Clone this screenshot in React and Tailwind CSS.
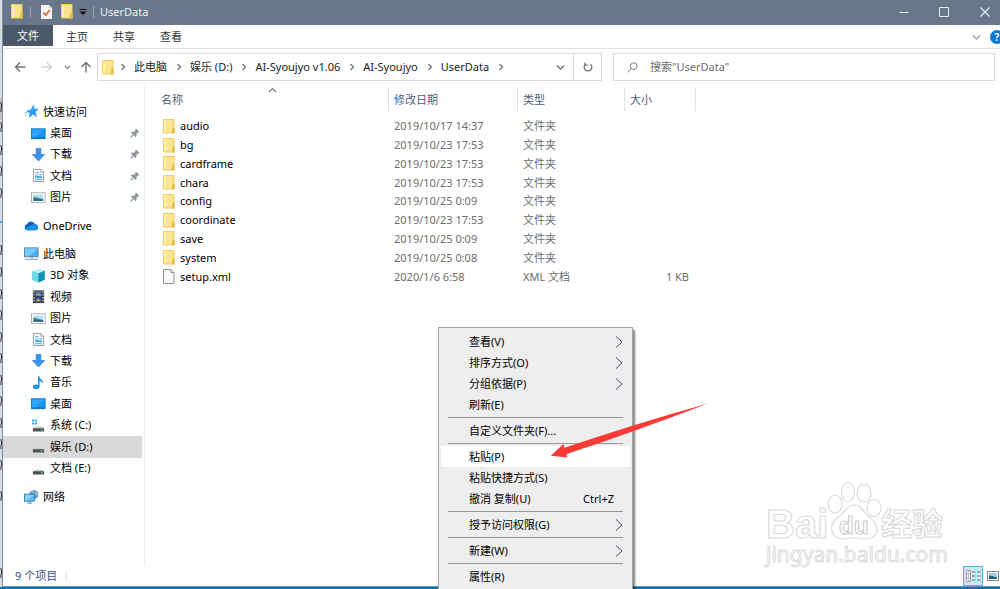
import React from "react";

function Folder({ className = "h-[15px] w-3" }) {
  return (
    <svg viewBox="0 0 12 15" className={className} aria-hidden="true">
      <rect x="0.5" y="0.5" width="10.5" height="13.5" fill="#fde48f" stroke="#f3cf5f" />
      <path d="M1 1h2v12H1z" fill="#fff0b5" />
      <path d="M9.4 8.5h2.2V14.5H8.6z" fill="#e9bd45" />
    </svg>
  );
}

function Chevron({ dir = "right", className = "h-2 w-1.5", stroke = 1.4 }) {
  const paths = {
    right: "M1.5 1L4.5 4L1.5 7",
    down: "M1 2.5L4.5 6L8 2.5",
    up: "M1 6L4.5 2.5L8 6",
  };
  return (
    <svg viewBox={dir === "right" ? "0 0 6 8" : "0 0 9 8"} className={className} fill="none" stroke="currentColor" strokeWidth={stroke} aria-hidden="true">
      <path d={paths[dir]} />
    </svg>
  );
}

const drive = (
  <>
    <path d="M4 9h8.500l1.500 2.500H2.500z" fill="#c9cccd" />
    <rect x="2" y="11" width="12" height="3.500" rx="0.6" fill="#4d5153" />
    <rect x="10.500" y="12" width="2" height="1.300" fill="#54e06a" />
  </>
);

const ICONS = {
  star: (
    <>
      <path d="M10 1.500l1 4.200 4-.2-3.200 3 1.500 4.500-4-2-3.600 3.300.8-4.600L2.800 7.500l4.500-.8z" fill="#2a9df4" stroke="#2a9df4" strokeWidth=".8" />
      <path d="M1 12.500h3M0.500 9.500h3" stroke="#7cc3f5" strokeWidth="1.200" />
    </>
  ),
  desktop: (
    <>
      <rect x="0.500" y="3" width="14.500" height="10.500" fill="#1594f0" stroke="#0b79cf" />
      <path d="M1 3.500h13.500L4 13H1z" fill="#3eaeff" opacity=".6" />
      <path d="M1 12.800h14" stroke="#0a68b5" />
    </>
  ),
  download: <path d="M5.500 1.500h5V8h4L8 15 1.500 8h4z" fill="#3a93e6" stroke="#2079cb" strokeWidth=".7" />,
  doc: (
    <>
      <path d="M2.500 1.500h8l3 3v10h-11z" fill="#f6f9fb" stroke="#8c959b" />
      <path d="M10.500 1.500v3h3" fill="#dfe5e9" stroke="#8c959b" strokeWidth=".8" />
      <path d="M4.500 5h4M4.500 7.500h3M9 7h3M4.500 12.500h7" stroke="#5ba7d6" />
      <rect x="4.500" y="8.500" width="7" height="2.500" fill="#52b1e6" />
    </>
  ),
  picture: (
    <>
      <rect x="0.500" y="3" width="14.500" height="10.500" fill="#fff" stroke="#a7acb0" />
      <rect x="2.500" y="5" width="10.500" height="6.500" fill="#a9dcf5" />
      <path d="M2.500 7.500c4 0 6 2 10.500 2v2H2.500z" fill="#3d8277" />
      <path d="M2.500 10.500c4-1.500 6 0 10.500 0v1H2.500z" fill="#2c5d8e" />
    </>
  ),
  onedrive: (
    <>
      <path d="M3.500 13A3.300 3.300 0 0 1 3 6.600 5 5 0 0 1 12 6.500a3.400 3.400 0 0 1 1 6.500z" fill="#0a64b8" />
      <path d="M3.500 13c-1.500 0-2.600-.7-3-1.800L8 7.500c2-1.300 5-1 6.500 1.300.9 1.700 0 4.200-2.500 4.200z" fill="#1490e6" />
    </>
  ),
  pc: (
    <>
      <rect x="0.500" y="2" width="14.500" height="9.500" fill="#49b4f4" stroke="#5b7f99" />
      <path d="M1 2.500h13.500L5 11H1z" fill="#8ad4ff" opacity=".7" />
      <path d="M6 12h4v1H6z" fill="#8b9aa5" />
      <path d="M1 14.300h14" stroke="#93a5b3" strokeWidth="1.200" />
    </>
  ),
  cube: (
    <>
      <path d="M1.500 3.500L9 1l5.500 2v9.500L8 15.500l-6.500-3z" fill="#29b4cf" />
      <path d="M1.500 3.500L8 5.500v10l-6.500-3z" fill="#6fd8e8" />
      <path d="M8 5.500l6.500-2.500v9.500L8 15.500z" fill="#1293b5" />
      <path d="M1.500 3.500L9 1l5.500 2L8 5.500z" fill="#c1f1f7" />
    </>
  ),
  video: (
    <>
      <rect x="2" y="1.500" width="12" height="13.500" fill="#3b3d42" />
      <path d="M3.200 2.500v12M12.800 2.500v12" stroke="#e8e8e8" strokeWidth="1.200" strokeDasharray="1.500 1.500" />
      <rect x="4.800" y="2.500" width="6.400" height="5" fill="#3c78c8" />
      <rect x="4.800" y="8.500" width="6.400" height="5.500" fill="#31539b" />
      <path d="M5 6.500l3-2 3 3zM5 13l2.500-3 3.500 3z" fill="#d8a33b" />
      <path d="M8.500 3l2 1.500" stroke="#c84f3b" />
    </>
  ),
  music: (
    <>
      <ellipse cx="5.500" cy="12.500" rx="3.500" ry="2.500" fill="#1b97ee" />
      <path d="M7.500 1.500h1.600c.2 3 4.200 3.500 3.600 8.200-.7-2-2.200-2.700-3.600-3v6H7.500z" fill="#1b97ee" />
    </>
  ),
  system: (
    <>
      <path d="M1 1.500h2.300v2.200H1zM4.200 1.500h2.300v2.200H4.200zM1 4.700h2.300v2.200H1zM4.200 4.700h2.300v2.200H4.200z" fill="#22b4f2" />
      {drive}
    </>
  ),
  drive,
  network: (
    <>
      <circle cx="10.500" cy="6" r="5" fill="#6d9fbd" />
      <path d="M7 3c2-2 4-1 3 1M13 3c0 1 0 3 2 3" fill="none" stroke="#a9d0e2" strokeWidth="1.200" />
      <rect x="0.500" y="5.500" width="10.500" height="7.500" fill="#5bbdf3" stroke="#3a7ba8" />
      <path d="M1 6h9L3 12.500H1z" fill="#9cdcff" opacity=".7" />
      <path d="M3.500 15h5M6 13v2" stroke="#7f9cb1" strokeWidth="1.200" />
    </>
  ),
};

function Icon({ name }) {
  return (
    <svg viewBox="0 0 16 16" className="size-[15px] shrink-0" aria-hidden="true">
      {ICONS[name]}
    </svg>
  );
}

function Pin() {
  return (
    <svg viewBox="0 0 10 10" className="size-2.5" aria-hidden="true">
      <path d="M6 .5l3.500 3.500-1 .6-.6-.1-1.500 1.700.1 2-.9.9-4.700-4.700.9-.9 2 .2 1.700-1.500-.1-.8z" fill="#8d989f" />
      <path d="M3.500 6.500L.7 9.300" stroke="#8d989f" strokeWidth="1.200" />
    </svg>
  );
}

function NavItem({ icon, label, root, pinned, selected }) {
  return (
    <li className="flex">
      <a
        href="#"
        aria-current={selected ? "page" : undefined}
        className={`flex flex-1 items-center gap-1 pr-[2px] leading-4 ${root ? "pl-[21px]" : "pl-7"} ${selected ? "bg-[#d9d9d9]" : ""}`}
      >
        <Icon name={icon} />
        <span className="flex-1 whitespace-nowrap">{label}</span>
        {pinned && <Pin />}
      </a>
    </li>
  );
}

const THIS_PC = [
  ["cube", "3D 对象"],
  ["video", "视频"],
  ["picture", "图片"],
  ["doc", "文档"],
  ["download", "下载"],
  ["music", "音乐"],
  ["desktop", "桌面"],
  ["system", "系统 (C:)"],
  ["drive", "娱乐 (D:)"],
  ["drive", "文档 (E:)"],
];

function Sidebar() {
  return (
    <nav aria-label="导航窗格" className="flex w-[142px] shrink-0 flex-col gap-[7px] border-r border-[#f0f0f0] pt-4 pr-[2px] text-black">
      <ul className="grid min-h-[107px]">
        <NavItem root icon="star" label="快速访问" />
        <NavItem pinned icon="desktop" label="桌面" />
        <NavItem pinned icon="download" label="下载" />
        <NavItem pinned icon="doc" label="文档" />
        <NavItem pinned icon="picture" label="图片" />
      </ul>
      <ul className="grid min-h-[21px]">
        <NavItem root icon="onedrive" label="OneDrive" />
      </ul>
      <ul className="grid min-h-[236px]">
        <NavItem root icon="pc" label="此电脑" />
        {THIS_PC.map(([icon, label]) => (
          <NavItem key={label} icon={icon} label={label} selected={label === "娱乐 (D:)"} />
        ))}
      </ul>
      <ul className="grid min-h-[21px]">
        <NavItem root icon="network" label="网络" />
      </ul>
    </nav>
  );
}

const FILES = [
  ["audio", "2019/10/17 14:37"],
  ["bg", "2019/10/23 17:53"],
  ["cardframe", "2019/10/23 17:53"],
  ["chara", "2019/10/23 17:53"],
  ["config", "2019/10/25 0:09"],
  ["coordinate", "2019/10/23 17:53"],
  ["save", "2019/10/25 0:09"],
  ["system", "2019/10/25 0:08"],
  ["setup.xml", "2020/1/6 6:58", "XML 文档", "1 KB"],
];

function FileTable() {
  const head = "flex h-[23px] items-center border-r border-[#e2e2e2]";
  return (
    <table className="h-[198px] w-[551px] table-fixed border-collapse text-left text-[#6d6d6d]">
      <colgroup>
        <col className="w-[244px]" />
        <col className="w-[129px]" />
        <col className="w-[107px]" />
        <col />
      </colgroup>
      <thead className="text-[#4c607a]">
        <tr className="h-[29px] align-top">
          <th className="relative p-0 font-normal">
            <div className={`${head} pl-4`}>名称</div>
            <Chevron dir="up" stroke={1.2} className="absolute -top-[2px] left-[123px] h-2 w-[9px] text-[#777]" />
          </th>
          <th className="p-0 font-normal"><div className={`${head} pl-[5px]`}>修改日期</div></th>
          <th className="p-0 font-normal"><div className={`${head} pl-[5px]`}>类型</div></th>
          <th className="p-0 font-normal"><div className={`${head} pl-[5px]`}>大小</div></th>
        </tr>
      </thead>
      <tbody>
        {FILES.map(([name, date, type = "文件夹", size = ""]) => (
          <tr key={name} className="leading-4">
            <td className="p-0 pl-[18px]">
              <div className="flex items-center gap-[5px] text-black">
                {size ? (
                  <svg viewBox="0 0 12 15" className="h-[15px] w-3" aria-hidden="true">
                    <path d="M.5.5h7.500l3 3v11H.5z" fill="#fafafa" stroke="#8e8e8e" />
                    <path d="M8 .5v3h3" fill="#e5e5e5" stroke="#8e8e8e" />
                  </svg>
                ) : (
                  <Folder />
                )}
                {name}
              </div>
            </td>
            <td className="p-0 pl-[5px]">{date}</td>
            <td className="p-0 pl-[5px]">{type}</td>
            <td className="p-0 pr-[7px] text-right">{size}</td>
          </tr>
        ))}
      </tbody>
    </table>
  );
}

const MENU = [
  [["查看(V)", ">"], ["排序方式(O)", ">"], ["分组依据(P)", ">"], ["刷新(E)"]],
  [["自定义文件夹(F)..."]],
  [["粘贴(P)"], ["粘贴快捷方式(S)"], ["撤消 复制(U)", "Ctrl+Z"]],
  [["授予访问权限(G)", ">"]],
  [["新建(W)", ">"]],
  [["属性(R)"]],
];

function ContextMenu() {
  return (
    <div role="menu" className="absolute top-[327px] left-[438px] w-[195px] border border-[#a5a5a5] bg-[#eeeeee] px-[2px] py-[3px] text-black shadow-[2px_3px_2px_rgba(0,0,0,0.5)]">
      {MENU.map((group, i) => (
        <React.Fragment key={i}>
          {i > 0 && <hr className="mx-[7px] my-[2px] border-[#979797]" />}
          {group.map(([label, extra]) => (
            <button
              key={label}
              role="menuitem"
              className={`flex h-[21px] w-full items-center justify-between pl-7 leading-4 ${label === "粘贴(P)" ? "bg-white" : ""}`}
            >
              {label}
              {extra === ">" && (
                <svg viewBox="0 0 8 12" className="mr-[7px] h-3 w-2" fill="none" stroke="#444b66" aria-hidden="true">
                  <path d="M1 .5L7 6 1 11.500" />
                </svg>
              )}
              {extra && extra !== ">" && <span className="mr-4">{extra}</span>}
            </button>
          ))}
        </React.Fragment>
      ))}
    </div>
  );
}

function Watermark() {
  return (
    <svg viewBox="0 0 184 90" className="pointer-events-none absolute right-[52px] bottom-[19px] h-[90px] w-[184px]" fill="#fff" stroke="#dcdcdc" strokeWidth="1.200">
      <text x="2" y="58" fontFamily="Liberation Sans" fontWeight="bold" fontSize="40">Bai</text>
      <ellipse cx="71" cy="24" rx="7" ry="9" />
      <ellipse cx="84" cy="12" rx="6.500" ry="9.500" />
      <ellipse cx="100" cy="13" rx="7" ry="9" />
      <ellipse cx="110" cy="28" rx="7" ry="8.500" />
      <path d="M90 25c-7 0-9 7-14 11-6 4-10 9-8 15 2 8 10 9 16 7h12c7 2 15 1 17-7 1-7-4-11-9-15-4-4-7-11-14-11z" />
      <text x="75" y="54" fontFamily="Liberation Sans" fontWeight="bold" fontSize="24" stroke="#cfcfcf">du</text>
      <text x="117" y="55" fontFamily="Noto Sans CJK SC" fontWeight="bold" fontSize="31">经验</text>
      <text x="2" y="82" fontFamily="Noto Sans" fontSize="21" strokeWidth="1">jingyan.baidu.com</text>
    </svg>
  );
}

function BackgroundEdge() {
  const marks = [107, 127, 150, 171, 193, 250, 272, 294, 315, 337, 358, 380, 401, 423, 444, 465, 496, 573];
  return (
    <svg viewBox="0 0 2 587" className="h-[587px] w-[2px] shrink-0" aria-hidden="true">
      <rect width="2" height="587" fill="#dadde0" />
      <rect y="98" width="2" height="22" fill="#bfbfbf" />
      {marks.map((y) => (
        <path key={y} d={`M0 ${y - 4}h2M1.500 ${y - 3}v4M0 ${y + 2}h2M1 ${y + 3}v2`} stroke="#35312f" />
      ))}
      <path d="M0 222h2" stroke="#49b2e6" strokeWidth="2" />
    </svg>
  );
}

const CRUMBS = ["此电脑", "娱乐 (D:)", "AI-Syoujyo v1.06", "AI-Syoujyo", "UserData"];

export default function App() {
  return (
    <div className="relative flex h-screen overflow-hidden bg-[#0c74b5] font-['Noto_Sans','Noto_Sans_CJK_SC',sans-serif] text-[11px] leading-4">
      <BackgroundEdge />
      <div className="mb-[2px] flex min-w-0 flex-1 flex-col overflow-hidden border-b border-l border-[#7f8da0] bg-white">
        <header className="flex h-[25px] shrink-0 items-center bg-[#68778a] pb-[2px] pl-2 text-white">
          <Folder className="h-[15px] w-3" />
          <span className="ml-[7px] h-3 w-px bg-[#98a3b0]" />
          <button aria-label="属性" className="ml-[10px]">
            <svg viewBox="0 0 11 14" className="h-[14px] w-[11px]" aria-hidden="true">
              <path d="M0 0h8l3 3v11H0z" fill="#f4f4f4" />
              <path d="M8 0v3h3" fill="#c9c9c9" />
              <path d="M2.500 7.500L4.700 10 9 5" fill="none" stroke="#dd6238" strokeWidth="1.600" />
            </svg>
          </button>
          <button aria-label="新建文件夹" className="ml-[9px]"><Folder className="h-[15px] w-3" /></button>
          <button aria-label="自定义快速访问工具栏" className="ml-[6px]">
            <svg viewBox="0 0 8 8" className="size-2" aria-hidden="true">
              <path d="M.5 1.500h7" stroke="#111" />
              <path d="M.5 3.500h7L4 7z" fill="#111" />
            </svg>
          </button>
          <span className="mx-[6px] h-3 w-px bg-[#98a3b0]" />
          <h1 className="flex-1 text-[#f1f3f5]">UserData</h1>
          <button aria-label="最小化" className="flex w-10 justify-center">
            <svg viewBox="0 0 10 10" className="size-2.5" stroke="#e6e9ed"><path d="M.5 5.500h9" /></svg>
          </button>
          <button aria-label="最大化" className="flex w-10 justify-center">
            <svg viewBox="0 0 10 10" className="size-2.5" fill="none" stroke="#e6e9ed"><path d="M.5.500h9v9h-9z" /></svg>
          </button>
          <button aria-label="关闭" className="mr-[-6px] flex w-[42px] justify-center">
            <svg viewBox="0 0 10 10" className="size-2.5" stroke="#e6e9ed" strokeWidth="1.200"><path d="M.5.500l9 9M9.500.500l-9 9" /></svg>
          </button>
        </header>

        <div className="flex h-6 shrink-0 items-center gap-px border-b border-[#e0e2e4] text-[#333]">
          <button className="h-[21px] w-[50px] self-start bg-[#4c5968] text-white">文件</button>
          <button className="px-3">主页</button>
          <button className="px-3">共享</button>
          <button className="px-3">查看</button>
          <button aria-label="展开功能区" className="ml-auto text-[#a0a0a0]">
            <Chevron dir="down" className="h-2 w-[9px]" />
          </button>
          <button aria-label="帮助" className="mr-[-4px] ml-2 size-[14px] rounded-full bg-[#0a78d4] text-center text-[10px] leading-[14px] font-bold text-white">?</button>
        </div>

        <div className="flex h-9 shrink-0 items-center pr-[5px] text-[#222]">
          <div className="flex w-[94px] items-center pl-[11px] text-[#707070]">
            <button aria-label="后退">
              <svg viewBox="0 0 12 12" className="size-3" fill="none" stroke="#707070" strokeWidth="1.400"><path d="M11.500 6H1.500M6 1.500L1.500 6 6 10.500" /></svg>
            </button>
            <button aria-label="前进" className="ml-[15px]">
              <svg viewBox="0 0 12 12" className="size-3" fill="none" stroke="#d2d2d2" strokeWidth="1.300"><path d="M.5 6h10M6 1.500L10.500 6 6 10.500" /></svg>
            </button>
            <button aria-label="最近的位置" className="ml-[11px]"><Chevron dir="down" className="h-[6px] w-[7px]" /></button>
            <button aria-label="上移" className="ml-[9px]">
              <svg viewBox="0 0 12 12" className="size-3" fill="none" stroke="#707070" strokeWidth="1.400"><path d="M6 11.500V1.500M1.500 6L6 1.500 10.500 6" /></svg>
            </button>
          </div>
          <div className="flex h-7 min-w-0 flex-[499_1_0%] items-center border border-[#dadada] pl-1">
            <Folder className="h-[15px] w-3 shrink-0" />
            <span className="mx-[6px] text-[#777]"><Chevron /></span>
            {CRUMBS.map((c) => (
              <React.Fragment key={c}>
                <a href="#" className="ml-[2px] whitespace-nowrap">{c}</a>
                <span className="mr-[6px] ml-[9px] text-[#777]"><Chevron /></span>
              </React.Fragment>
            ))}
            <button aria-label="以前的位置" className="mr-2 ml-auto text-[#707070]">
              <Chevron dir="down" className="h-2 w-[9px]" />
            </button>
            <button aria-label="刷新" className="flex h-full w-7 items-center justify-center border-l border-[#dadada]">
              <svg viewBox="0 0 10 10" className="size-2.5" fill="none" stroke="#707070" strokeWidth="1.300">
                <path d="M7.500 2.300A3.800 3.800 0 1 1 2.300 2.500" />
                <path d="M2 .7v2.500h2.700" />
              </svg>
            </button>
          </div>
          <label className="ml-[11px] flex h-7 min-w-0 flex-[367_1_0%] items-center gap-3 border border-[#dadada] pl-[13px]">
            <svg viewBox="0 0 11 11" className="size-[11px] shrink-0" fill="none" stroke="#7a7a7a" aria-hidden="true">
              <circle cx="6.800" cy="4.200" r="3.400" />
              <path d="M4.300 6.700L.6 10.400" />
            </svg>
            <input type="search" aria-label="搜索" placeholder={'搜索"UserData"'} className="w-full min-w-0 bg-transparent outline-none placeholder:text-[#6d6d6d]" />
          </label>
        </div>

        <div className="flex min-h-0 flex-1">
          <Sidebar />
          <main className="min-w-0 flex-1 pt-[3px]">
            <FileTable />
          </main>
        </div>

        <footer className="flex h-[21px] shrink-0 items-center pl-3 text-[#3d5573]">
          <span>9 个项目</span>
          <span className="ml-[9px] h-[10px] w-px bg-[#e6e6e6]" />
          <button aria-label="详细信息" className="ml-auto flex h-5 w-5 items-center justify-center border border-[#4fb3e2] bg-[#cbe8f6]">
            <svg viewBox="0 0 15 12" className="h-3 w-[15px]" fill="none" aria-hidden="true">
              <path d="M.5.500h4v11h-4zM.5 4h4M.5 8h4" fill="#fff" stroke="#8b8b8b" strokeWidth=".8" />
              <path d="M2 2h1M2 10h1" stroke="#d2663d" />
              <path d="M2 6h1" stroke="#3d78c8" />
              <path d="M6 2h3.500M11 2h3.500M6 6h3.500M11 6h3.500M6 10h3.500M11 10h3.500" stroke="#666f78" />
            </svg>
          </button>
          <button aria-label="大缩略图" className="mr-px ml-1">
            <svg viewBox="0 0 12 10" className="h-[10px] w-3" aria-hidden="true">
              <rect x=".5" y=".5" width="11" height="9" fill="#fff" stroke="#8b8b8b" />
              <rect x="2" y="2" width="8" height="6" fill="#9fd0f2" />
              <path d="M2 4.500c3 0 5 1.500 8 1.800V8H2z" fill="#2b6173" />
            </svg>
          </button>
        </footer>
      </div>

      <Watermark />
      <ContextMenu />
      <svg viewBox="0 0 158 56" className="pointer-events-none absolute top-[403px] left-[550px] h-14 w-[158px]" aria-hidden="true">
        <path d="M.8 52.800L13.300 41l1.200 3.800Q84 21 158 .4 86 28 16.800 51v3.400z" fill="#fb3a36" />
      </svg>
    </div>
  );
}
